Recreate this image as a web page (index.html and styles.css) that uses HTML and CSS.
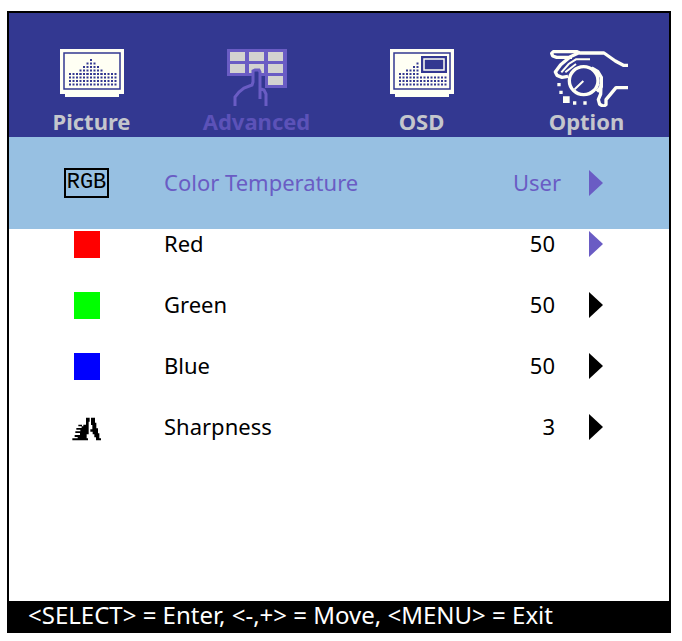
FILE: index.html
```html
<!DOCTYPE html>
<html lang="en">
<head>
    <meta charset="UTF-8">
    <meta name="viewport" content="width=device-width, initial-scale=1.0">
    <title>Advanced</title>
    <link rel="stylesheet" href="styles.css">
</head>
<body>
    <div class="osd">
        <nav class="tabs">
            <button class="tab" type="button">
                <svg class="tab-icon" width="64" height="58" viewBox="0 0 64 58">
                    <path fill="#fffff4" d="M0 0h64v45h-5v3H5v-3H0z"/>
                    <rect x="4" y="4" width="56" height="36" fill="none" stroke="#333891" stroke-width="1.5"/>
                    <g stroke="#333891" stroke-width="2" stroke-dasharray="2 1.5">
                        <path d="M30 11h2M26.5 14.5h9M23 18h16M19.5 21.5h23M16 25h30"/>
                        <path d="M9 25h47.500M9 28.500h47.500M9 32h47.500M9 35.500h47.500"/>
                    </g>
                </svg>
                <span>Picture</span>
            </button>
            <button class="tab active" type="button">
                <svg class="tab-icon" width="60" height="58" viewBox="0 0 60 58">
                    <path fill="#6a5cc4" d="M0 0h60v39H38V27H0z"/>
                    <path fill="#d3d3d0" d="M3 3h15v9H3zM22 3h15v9H22zM41 3h15v9H41zM3 15h15v9H3zM22 15h15v9H22zM41 15h15v9H41zM41 27h15v9H41z"/>
                    <path fill="#333891" d="M26 22h8v17h-8z"/>
                    <path fill="none" stroke="#6a5cc4" stroke-width="3" d="M8 57v-9l4-5 5-4 8-3 1-3V22l2-1h4l1 2v27M34 40l3 1 2 4v12"/>
                </svg>
                <span>Advanced</span>
            </button>
            <button class="tab" type="button">
                <svg class="tab-icon" width="64" height="58" viewBox="0 0 64 58">
                    <path fill="#fffff4" d="M0 0h64v45h-5v3H5v-3H0z"/>
                    <rect x="4" y="4" width="56" height="36" fill="none" stroke="#333891" stroke-width="1.5"/>
                    <path fill="#333891" d="M31 7h26v17H31z"/>
                    <rect x="34" y="10" width="20" height="11" fill="none" stroke="#fffff4" stroke-width="1.5"/>
                    <g stroke="#333891" stroke-width="2" stroke-dasharray="2 1.5">
                        <path d="M26.5 14.5h2M23 18h6M16 21.5h13M9 25h20M9 28.500h47.500M9 32h47.500M9 35.500h47.500"/>
                    </g>
                </svg>
                <span>OSD</span>
            </button>
            <button class="tab" type="button">
                <svg class="tab-icon" width="86" height="58" viewBox="12 39 258 174">
                    <g fill="none" stroke="#fffff4" stroke-width="10" stroke-linejoin="round">
                        <path d="M264 88h-14l-24-13-34-24h-72l-10-4H40l-5 5 3 8 12 4h46"/>
                        <path d="M120 49l-29 13-29 24-16 22 5 10 15 6 18-3"/>
                        <path d="M264 155h-36l-30 36v15l-8 5-11-6-4-14 7-17 1-30"/>
                        <ellipse cx="131" cy="134" rx="43" ry="42"/>
                        <path d="M155 96l18 10 11 18v28l-13 15"/>
                    </g>
                    <path fill="none" stroke="#fffff4" stroke-width="6" d="M150 70h-42L86 84l-22 25M108 84l-32 25M104 160l26-25"/>
                    <path fill="#fffff4" d="M52 141h10v10H52zM58 164h10v10H58zM69 181h20v20H69zM99 196h10v10H99zM130 196h10v10h-10z"/>
                </svg>
                <span>Option</span>
            </button>
        </nav>
        <main class="menu">
            <button class="row selected" type="button">
                <span class="row-icon"><span class="rgb">RGB</span></span>
                <span class="name">Color Temperature</span>
                <span class="value">User</span>
                <svg class="arrow" width="14" height="26" viewBox="0 0 14 26"><path d="M0 0l14 13L0 26z"/></svg>
            </button>
            <button class="row linked" type="button">
                <span class="row-icon"><span class="swatch red"></span></span>
                <span class="name">Red</span>
                <span class="value number">50</span>
                <svg class="arrow" width="14" height="26" viewBox="0 0 14 26"><path d="M0 0l14 13L0 26z"/></svg>
            </button>
            <button class="row" type="button">
                <span class="row-icon"><span class="swatch green"></span></span>
                <span class="name">Green</span>
                <span class="value number">50</span>
                <svg class="arrow" width="14" height="26" viewBox="0 0 14 26"><path d="M0 0l14 13L0 26z"/></svg>
            </button>
            <button class="row" type="button">
                <span class="row-icon"><span class="swatch blue"></span></span>
                <span class="name">Blue</span>
                <span class="value number">50</span>
                <svg class="arrow" width="14" height="26" viewBox="0 0 14 26"><path d="M0 0l14 13L0 26z"/></svg>
            </button>
            <button class="row" type="button">
                <span class="row-icon">
                    <!-- sharpness mark with motion lines -->
                    <svg width="30" height="28" viewBox="33 26 90 84">
                        <path d="M75 40h11v12h-3v38h-6v12h4v6H34v-6h16v-4h-9v-6h16v-6H43v-5h15v-5H46v-5h16v-5H52v-5h11v5h4v-5h8z"/>
                        <path d="M90 40h12v15h4v17h5v15h4v15h5v6h-15v-9h-5v-9h-5v-8h-7v-7h6V62h-4z"/>
                    </svg>
                </span>
                <span class="name">Sharpness</span>
                <span class="value number">3</span>
                <svg class="arrow" width="14" height="26" viewBox="0 0 14 26"><path d="M0 0l14 13L0 26z"/></svg>
            </button>
        </main>
        <footer class="hints">&lt;SELECT&gt; = Enter, &lt;-,+&gt; = Move, &lt;MENU&gt; = Exit</footer>
    </div>
</body>
</html>
```
FILE: styles.css
```css
* {
    box-sizing: border-box;
}
body {
    margin: 0;
    padding: 11px 11px 8px 7px;
    min-height: 100vh;
    display: flex;
    background-color: #ffffff;
    font-family: "Noto Sans", "Open Sans", sans-serif;
    font-size: 22px;
    line-height: 28px;
    color: #000000;
}
button {
    border: none;
    background: none;
    padding: 0;
    font: inherit;
    color: inherit;
    cursor: pointer;
}
.osd {
    flex: 1;
    display: flex;
    flex-direction: column;
    border: 2px solid #000000;
}
.tabs {
    display: grid;
    grid-template-columns: repeat(4, 1fr);
    background-color: #333891;
    padding: 36px 0 0;
}
.tab {
    display: flex;
    flex-direction: column;
    align-items: center;
    height: 88px;
    font-weight: 700;
    color: #c4c6cc;
}
.tab.active {
    color: #5c52b8;
}
.tab-icon {
    display: block;
}
.menu {
    flex: 1;
    display: flex;
    flex-direction: column;
    gap: 33px;
}
.row {
    display: grid;
    grid-template-columns: 155px 1fr 90px 28px 80px;
    align-items: center;
    height: 28px;
    text-align: left;
}
.row.selected {
    height: 92px;
    margin-bottom: -33px;
    background-color: #97c0e2;
    color: #6a5cc4;
}
.row-icon {
    display: flex;
    justify-content: center;
}
.name,
.value {
    padding-bottom: 2px;
}
.value {
    text-align: right;
}
.value.number {
    padding-right: 6px;
}
.arrow {
    grid-column: 5;
    fill: #000000;
}
.selected .arrow,
.linked .arrow {
    fill: #6a5cc4;
}
.rgb {
    border: 2px solid #000000;
    width: 45px;
    height: 30px;
    font-family: "Liberation Mono", monospace;
    font-size: 22px;
    line-height: 26px;
    text-align: center;
    color: #000000;
}
.swatch {
    width: 26px;
    height: 27px;
}
.red {
    background-color: #ff0000;
}
.green {
    background-color: #00ff00;
}
.blue {
    background-color: #0000ff;
}
.hints {
    background-color: #000000;
    color: #ffffff;
    font-size: 24px;
    padding: 0 19px 2px;
}
```
